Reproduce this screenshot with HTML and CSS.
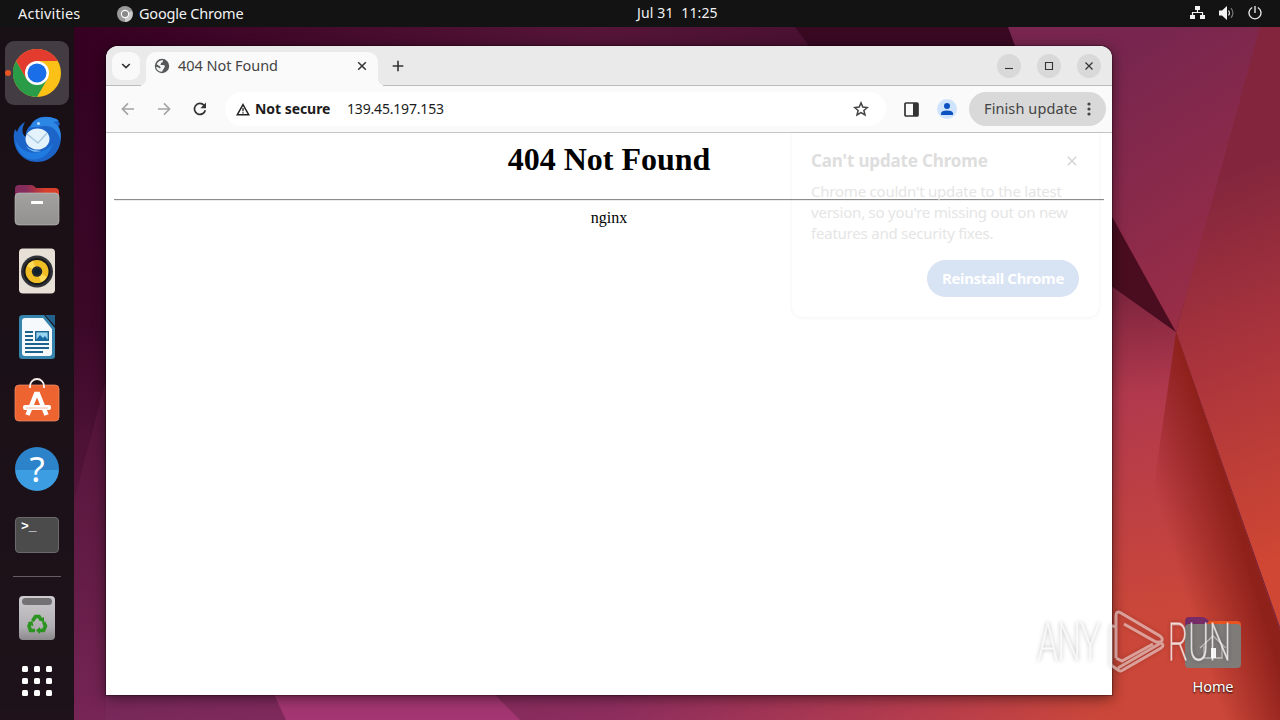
FILE: index.html
```html
<!DOCTYPE html>
<html lang="en">
<head>
    <meta charset="UTF-8">
    <title>404 Not Found</title>
    <link rel="stylesheet" href="styles.css">
</head>
<body>
    <svg class="wallpaper" viewBox="0 0 1280 720">
        <defs>
            <linearGradient id="base" x1="0" y1="0" x2="0" y2="1">
                <stop offset="0" stop-color="#300020"/>
                <stop offset=".45" stop-color="#3c0828"/>
                <stop offset=".8" stop-color="#601c43"/>
                <stop offset="1" stop-color="#7c285b"/>
            </linearGradient>
            <linearGradient id="top" x1="0" x2="1">
                <stop offset="0" stop-color="#350021"/>
                <stop offset=".5" stop-color="#551538"/>
                <stop offset="1" stop-color="#3c0b29"/>
            </linearGradient>
            <linearGradient id="bottom" gradientUnits="userSpaceOnUse" x1="106" y1="0" x2="1110" y2="0">
                <stop offset="0" stop-color="#78285a"/>
                <stop offset=".5" stop-color="#8c2d5e"/>
                <stop offset=".8" stop-color="#b43c4e"/>
                <stop offset="1" stop-color="#cb4739"/>
            </linearGradient>
            <linearGradient id="upper" gradientUnits="userSpaceOnUse" x1="1080" y1="80" x2="1220" y2="300">
                <stop offset="0" stop-color="#78264f"/>
                <stop offset="1" stop-color="#992d46"/>
            </linearGradient>
            <linearGradient id="side" gradientUnits="userSpaceOnUse" x1="1190" y1="190" x2="1330" y2="540">
                <stop offset="0" stop-color="#83263d"/>
                <stop offset=".45" stop-color="#aa343c"/>
                <stop offset="1" stop-color="#d04733"/>
            </linearGradient>
            <linearGradient id="middle" gradientUnits="userSpaceOnUse" x1="1110" y1="300" x2="1140" y2="620">
                <stop offset="0" stop-color="#81263f"/>
                <stop offset=".3" stop-color="#b1394d"/>
                <stop offset="1" stop-color="#cb4739"/>
            </linearGradient>
            <linearGradient id="fold" gradientUnits="userSpaceOnUse" x1="1170" y1="545" x2="1252" y2="520">
                <stop offset="0" stop-color="#8f211b" stop-opacity="0"/>
                <stop offset=".8" stop-color="#8f211b"/>
            </linearGradient>
        </defs>
        <rect width="1280" height="720" fill="url(#base)"/>
        <path d="M74 27H1110V90H74z" fill="url(#top)"/>
        <path d="M795 27h220l30 60H840z" fill="#390922"/>
        <path d="M106 380L74 500v220h32z" fill="#6c204d" opacity=".35"/>
        <path d="M106 660h1174v60H106z" fill="url(#bottom)"/>
        <path d="M272 690h218l30 30H286z" fill="#a33672"/>
        <path d="M1008 27h255L1176 332 1050 140z" fill="url(#upper)"/>
        <path d="M1260 27h20v600L1176 332z" fill="url(#side)"/>
        <path d="M1100 195L1176 332 1100 278z" fill="#4a0d20"/>
        <path d="M1100 278L1176 332 1280 630V720H1100z" fill="url(#middle)"/>
        <path d="M1176 332L1280 630V720H1120z" fill="url(#fold)"/>
    </svg>

    <header class="topbar">
        <span class="activities">Activities</span>
        <span class="app-menu">
            <svg width="16" height="16" viewBox="0 0 16 16">
                <circle cx="8" cy="8" r="8" fill="#999"/>
                <path d="M8 8L15 5A8 8 0 0 1 8 16z" fill="#ccc"/>
                <circle cx="8" cy="8" r="3.6" fill="#888" stroke="#fff" stroke-width="1.1"/>
            </svg>
            <span>Google Chrome</span>
        </span>
        <span class="clock">Jul 31&nbsp; 11:25</span>
        <span class="tray">
            <svg width="16" height="14" viewBox="0 0 16 14" fill="#f2f2f2">
                <path d="M5 0h5v4H5zM0 9h5v4H0zM10 9h5v4h-5z"/>
                <path d="M7.500 4v2.500M2.500 9V6.500h10V9" fill="none" stroke="#f2f2f2" stroke-width="1.200"/>
            </svg>
            <svg width="16" height="14" viewBox="0 0 16 14">
                <path d="M0 4.500h3L8 0v14L3 9.500H0z" fill="#f2f2f2"/>
                <path d="M9.500 4.500q2 2.500 0 5" fill="none" stroke="#ddd" stroke-width="1.200"/>
                <path d="M12 2.200q3.800 4.800 0 9.600" fill="none" stroke="#777" stroke-width="1.200"/>
            </svg>
            <svg width="14" height="14" viewBox="0 0 14 14" fill="none" stroke="#f2f2f2" stroke-width="1.300">
                <path d="M4.200 1.500a6 6 0 1 0 5.600 0M7 0v7"/>
            </svg>
        </span>
    </header>

    <div class="desktop">
        <nav class="dock">
            <div class="tile active">
                <svg width="48" height="48" viewBox="0 0 48 48">
                    <circle cx="24" cy="24" r="24" fill="#fbc116"/>
                    <path d="M3.200 12A24 24 0 0 1 44.800 12H24v12z" fill="#e33b2e"/>
                    <path d="M3.200 12A24 24 0 0 0 24 48L34.400 30 24 24 13.600 30z" fill="#2a9c48"/>
                    <path d="M3.200 12L13.600 30 24 24V12z" fill="#e33b2e"/>
                    <circle cx="24" cy="24" r="12" fill="#fff"/>
                    <circle cx="24" cy="24" r="9.500" fill="#1a6fe8"/>
                </svg>
            </div>
            <div class="tile">
                <svg width="48" height="48" viewBox="0 0 48 48">
                    <path d="M1 18C-1 34 9 47 24 47c14 0 24-11 24-25 0-4-1-7-3-10l2-3-3-5-9-2c-8-1-14 2-17 8-4 3-6 8-5 12-5-3-4-9-1-15-4 2-7 6-8 10l-2-3z" fill="#1c64c8"/>
                    <path d="M34 2c6 0 9 2 12 4l-6 1c6 3 9 9 7 18-2-10-8-14-15-14l-8 1c-3 0-5 0-7 1 2-7 8-11 17-11z" fill="#2b86e4"/>
                    <path d="M2 25c6 14 24 18 38 4-4 12-14 17-24 15C8 41 3 33 2 25z" fill="#1f7be0"/>
                    <ellipse cx="24.500" cy="24" rx="12" ry="10.500" fill="#e4f2fd"/>
                    <path d="M14 19l11 9 9-10" fill="none" stroke="#a9c9df" stroke-width="1.500"/>
                    <path d="M13 31c5 5 10 4 15 5-5 2-12 0-15-5z" fill="#7fc0f5"/>
                    <circle cx="25.500" cy="8.500" r="1.500" fill="#bfe2ff"/>
                </svg>
            </div>
            <div class="tile">
                <svg width="46" height="42" viewBox="0 0 46 42">
                    <defs>
                        <linearGradient id="tab"><stop offset=".25" stop-color="#842c5c"/><stop offset=".7" stop-color="#d9402b"/></linearGradient>
                        <linearGradient id="grey" x1="0" y1="0" x2="0" y2="1"><stop stop-color="#a3a1a0"/><stop offset="1" stop-color="#93918f"/></linearGradient>
                    </defs>
                    <path d="M1 18V5q0-4 4-4h12q3 0 5 3h19q4 0 4 4v10z" fill="url(#tab)"/>
                    <rect x="1" y="9" width="44" height="32" rx="4" fill="url(#grey)" stroke="#c4c2c0" stroke-width=".6"/>
                    <rect x="17" y="17" width="12" height="3" rx=".6" fill="#fff"/>
                </svg>
            </div>
            <div class="tile">
                <svg width="36" height="46" viewBox="0 0 36 46">
                    <rect y=".5" width="36" height="45" rx="4" fill="#e6e0d6"/>
                    <circle cx="18" cy="23.500" r="16" fill="#303238"/>
                    <circle cx="18" cy="23.500" r="13.500" fill="#17191b"/>
                    <circle cx="18" cy="23.500" r="11.500" fill="#f0bd25"/>
                    <path d="M18 23.500L8 18a11.500 11.500 0 0 1 6-5.200zM18 23.500l10 5.500a11.500 11.500 0 0 1-6 5.200z" fill="#ffda58"/>
                    <circle cx="18" cy="23.500" r="5.200" fill="#22272c"/>
                    <circle cx="18" cy="23.500" r="3" fill="#11202c"/>
                </svg>
            </div>
            <div class="tile">
                <svg width="36" height="46" viewBox="0 0 36 46">
                    <path d="M4 1h21l11 13v28q0 3-3 3H3q-3 0-3-3V4q0-3 4-3z" fill="#3484ae"/>
                    <path d="M6 4h18l9 11v24q0 3-3 3H6q-3 0-3-3V7q0-3 3-3z" fill="#f6f9fb"/>
                    <path d="M26 1h10v11z" fill="#22618b"/>
                    <path d="M6 18h8M6 22h8M6 26h8M6 30h24M6 34h24M6 38h18" stroke="#1c638d" stroke-width="2"/>
                    <rect x="16.700" y="17.700" width="12.600" height="8.600" fill="#99d3f2" stroke="#1c638d" stroke-width="1.400"/>
                    <path d="M17 26l4-5 3 3 2-2 3 4z" fill="#176aa5"/>
                </svg>
            </div>
            <div class="tile">
                <svg width="46" height="50" viewBox="0 0 46 50">
                    <rect x="1" y="7" width="44" height="36" rx="4" fill="#ee6430" stroke="#f4906a" stroke-width=".7"/>
                    <path d="M16 10V8a7 7 0 0 1 14 0v2" fill="none" stroke="#f6efe9" stroke-width="1.800"/>
                    <path d="M13.500 37L22 16h2l8.500 21" fill="none" stroke="#fff" stroke-width="4.500"/>
                    <rect x="9" y="27" width="28" height="5" rx="2" fill="#fff"/>
                    <path d="M12 30h22" stroke="#f4a081" stroke-width=".7"/>
                </svg>
            </div>
            <div class="tile"><span class="help">?</span></div>
            <div class="tile"><span class="terminal">&gt;_</span></div>
            <div class="separator"></div>
            <div class="tile">
                <svg width="36" height="46" viewBox="0 0 36 46">
                    <defs>
                        <linearGradient id="bin" x1="0" y1="0" x2="0" y2="1"><stop stop-color="#cdcbcd"/><stop offset=".7" stop-color="#b1afb1"/><stop offset="1" stop-color="#8b898b"/></linearGradient>
                    </defs>
                    <rect y="1" width="36" height="44" rx="4" fill="url(#bin)"/>
                    <rect x="3" y="3" width="30" height="7" rx="3.500" fill="#747174"/>
                    <g fill="none" stroke="#2b9421" stroke-width="3.600" transform="translate(0 -1)">
                        <path d="M13.500 27l3-4.500h3.500l2 3"/>
                        <path d="M24.500 28l2 4-2 4.500H19"/>
                        <path d="M16 36.500h-4.500L10 32l2-3.500"/>
                    </g>
                    <path d="M19.500 25l5.500-3v5.500zM21 32v7l-4-3.500zM8.500 27.500l5-1.500 1 5.500z" fill="#2b9421"/>
                </svg>
            </div>
            <div class="apps">
                <i></i><i></i><i></i>
                <i></i><i></i><i></i>
                <i></i><i></i><i></i>
            </div>
        </nav>

        <main class="window">
            <div class="tabstrip">
                <span class="tab-search">
                    <svg width="10" height="6" viewBox="0 0 10 6"><path d="M1.200 1L5 4.600 8.800 1" fill="none" stroke="#333" stroke-width="1.700"/></svg>
                </span>
                <div class="tab">
                    <svg width="16" height="16" viewBox="0 0 16 16">
                        <circle cx="8" cy="8" r="7.200" fill="#555759"/>
                        <path d="M8.800 2q.6 2.500-1.600 2.800L6.500 7h3c2 .5 1.500 2.500.3 3.500L8 13.800C5 13.800 2.500 12 2 8.800l2 .4 2 1.300q1.500-1-.2-2.300L2.600 6.300Q4.500 2.500 8.800 2z" fill="#f4f4f4"/>
                    </svg>
                    <span class="tab-title">404 Not Found</span>
                    <svg width="10" height="10" viewBox="0 0 10 10"><path d="M1.200 1.200l7.600 7.600M8.800 1.200L1.200 8.800" stroke="#333" stroke-width="1.500"/></svg>
                </div>
                <svg class="new-tab" width="12" height="12" viewBox="0 0 12 12"><path d="M6 .7v10.600M.7 6h10.600" stroke="#333" stroke-width="1.600"/></svg>
                <div class="controls">
                    <span><svg width="10" height="10" viewBox="0 0 10 10"><path d="M1 7.500h8" stroke="#333" stroke-width="1.100"/></svg></span>
                    <span><svg width="10" height="10" viewBox="0 0 10 10"><path d="M1.500 1.500h7v7h-7z" fill="none" stroke="#333" stroke-width="1.100"/></svg></span>
                    <span><svg width="10" height="10" viewBox="0 0 10 10"><path d="M1.500 1.500l7 7M8.500 1.500l-7 7" stroke="#333" stroke-width="1.200"/></svg></span>
                </div>
            </div>

            <div class="toolbar">
                <svg width="14" height="14" viewBox="0 0 14 14" fill="none" stroke="#a4a4a4" stroke-width="1.600"><path d="M13 7H1.800M7 1.400L1.400 7 7 12.600"/></svg>
                <svg width="14" height="14" viewBox="0 0 14 14" fill="none" stroke="#a4a4a4" stroke-width="1.600"><path d="M1 7h11.200M7 1.400L12.600 7 7 12.600"/></svg>
                <svg width="14" height="14" viewBox="0 0 14 14"><path d="M12.300 8.200A5.500 5.500 0 1 1 11 3.200L12 4.500" fill="none" stroke="#333" stroke-width="1.700"/><path d="M13 .6v5.700H7.400z" fill="#333"/></svg>
                <div class="omnibox">
                    <svg width="14" height="13" viewBox="0 0 14 13"><path d="M7 1.600L12.800 11.800H1.200z" fill="none" stroke="#222" stroke-width="1.500"/><path d="M7 5v3.200M7 9.200v1.400" stroke="#222" stroke-width="1.300"/></svg>
                    <b>Not secure</b>
                    <span class="url">139.45.197.153</span>
                    <svg class="star" width="16" height="16" viewBox="0 0 16 16"><path d="M8 1.900l1.800 4.200 4.600.4-3.500 3 1.100 4.500L8 11.600 4 14l1.100-4.500-3.500-3 4.600-.4z" fill="none" stroke="#444" stroke-width="1.500"/></svg>
                </div>
                <svg class="panel" width="15" height="15" viewBox="0 0 15 15"><rect x="1" y="1" width="13" height="13" rx="1" fill="none" stroke="#333" stroke-width="1.700"/><path d="M9 1h5v13H9z" fill="#333"/></svg>
                <span class="avatar">
                    <svg width="12" height="12" viewBox="0 0 12 12" fill="#0b51c1"><circle cx="6" cy="3" r="3"/><path d="M0 12V10.300Q0 7.400 6 7.400t6 2.900V12z"/></svg>
                </span>
                <div class="update">
                    <span>Finish update</span>
                    <svg width="4" height="14" viewBox="0 0 4 14" fill="#444"><circle cx="2" cy="2" r="1.600"/><circle cx="2" cy="7" r="1.600"/><circle cx="2" cy="12" r="1.600"/></svg>
                </div>
            </div>

            <div class="page">
                <h1>404 Not Found</h1>
                <hr>
                <div class="server">nginx</div>
            </div>

            <div class="bubble">
                <div class="bubble-head">
                    <b>Can't update Chrome</b>
                    <svg width="10" height="10" viewBox="0 0 10 10"><path d="M.8.8l8.400 8.400M9.200.8L.8 9.200" stroke="#d4d4d4" stroke-width="1.500"/></svg>
                </div>
                <p>Chrome couldn't update to the latest<br>version, so you're missing out on new<br>features and security fixes.</p>
                <button>Reinstall Chrome</button>
            </div>
        </main>

        <div class="home">
            <svg width="56" height="52" viewBox="0 0 56 52">
                <path d="M0 16V4q0-4 4-4h13q4 0 7 4h28q4 0 4 4v8z" fill="#e95420"/>
                <path d="M0 16V4q0-4 4-4h13q4 0 7 4l-4 5v7z" fill="#772c67"/>
                <rect y="7" width="56" height="44" rx="4" fill="#7f7b79"/>
                <path d="M15 31l13-12 13 12M19 29v12h18V29" fill="none" stroke="#c4c1bf" stroke-width="1.300"/>
                <path d="M26 31h5v10h-5z" fill="#fff"/>
            </svg>
            <span>Home</span>
        </div>
    </div>

    <svg class="watermark" width="210" height="76" viewBox="0 0 210 76">
        <g class="mark-text">
            <text x="2" y="54" textLength="62" lengthAdjust="spacingAndGlyphs">ANY</text>
            <text x="132" y="54" textLength="63" lengthAdjust="spacingAndGlyphs">RUN</text>
        </g>
        <path class="mark-logo" d="M79 21q-4-3-4 2v36l7 5q3 2 5 0l38-22q4-3 0-5L82 62M80 52V10q0-6 5-3l39 23q4 3 1 6l-5 0-32-18M80 52l6 3 31-17"/>
    </svg>
</body>
</html>
```
FILE: styles.css
```css
* {
    box-sizing: border-box;
}

body {
    margin: 0;
    width: 1280px;
    height: 720px;
    overflow: hidden;
    display: flex;
    flex-direction: column;
    background: #300020;
    font-family: "Noto Sans", sans-serif;
    font-size: 14.5px;
}

svg {
    display: block;
    flex-shrink: 0;
}

.wallpaper {
    position: absolute;
    left: 0;
    top: 0;
    width: 1280px;
    height: 720px;
    z-index: -1;
}

.topbar {
    height: 27px;
    flex-shrink: 0;
    display: grid;
    grid-template-columns: 99px 520px 1fr auto;
    align-items: center;
    padding: 0 18px 2px;
    background: #131313;
    color: #f2f2f2;
    white-space: nowrap;
}

.activities {
    letter-spacing: .2px;
}

.app-menu {
    display: flex;
    align-items: center;
    gap: 6px;
    letter-spacing: -.2px;
}

.app-menu svg {
    position: relative;
    top: 1px;
}

.clock {
    font-size: 14px;
    letter-spacing: .15px;
}

.tray {
    display: flex;
    align-items: center;
    gap: 13px;
}

.desktop {
    display: flex;
    flex: 1;
    position: relative;
}

.dock {
    width: 74px;
    padding-top: 14px;
    display: flex;
    flex-direction: column;
    align-items: center;
    gap: 2px;
    background: rgba(24, 17, 21, .93);
}

.tile {
    width: 64px;
    height: 64px;
    flex-shrink: 0;
    display: flex;
    align-items: center;
    justify-content: center;
    border-radius: 9px;
}

.active {
    position: relative;
    background: #443c43;
}

.active::before {
    content: "";
    position: absolute;
    left: 0;
    top: 29px;
    width: 6px;
    height: 6px;
    border-radius: 50%;
    background: #e95420;
}

.help {
    width: 44px;
    height: 44px;
    border-radius: 50%;
    background: linear-gradient(#2c83ca 52%, #3c9de2 52%);
    color: #fff;
    font-size: 35px;
    line-height: 43px;
    text-align: center;
}

.terminal {
    width: 44px;
    height: 36px;
    padding: 1px 5px;
    border: 1px solid #6a6a6a;
    border-radius: 4px;
    background: #4b4b4b;
    color: #fff;
    font: bold 13px/16px "Liberation Mono", monospace;
}

.separator {
    width: 48px;
    height: 1px;
    flex-shrink: 0;
    margin: 7px 0;
    background: #655d63;
}

.apps {
    display: grid;
    grid-template-columns: repeat(3, 6px);
    gap: 6px;
    margin-top: 14px;
}

.apps i {
    height: 6px;
    border-radius: 1.5px;
    background: #fff;
}

.window {
    position: absolute;
    left: 106px;
    top: 19px;
    width: 1006px;
    height: 649px;
    display: flex;
    flex-direction: column;
    background: #fff;
    border-radius: 12px 12px 0 0;
    box-shadow: 0 0 1px 1px rgba(0, 0, 0, .3), 0 3px 14px rgba(0, 0, 0, .5);
    color: #444;
}

.tabstrip {
    height: 40px;
    flex-shrink: 0;
    display: flex;
    align-items: center;
    padding: 0 11px 0 6px;
    background: #eaeaea;
    border-bottom: 1px solid #bcbcbc;
    border-radius: 12px 12px 0 0;
}

.tab-search {
    width: 28px;
    height: 28px;
    display: flex;
    align-items: center;
    justify-content: center;
    border-radius: 9px;
    background: #f9f9f9;
}

.tab {
    position: relative;
    align-self: flex-end;
    width: 232px;
    height: 34px;
    margin: 0 0 -1px 6px;
    padding: 0 11px 6px 8px;
    display: flex;
    align-items: center;
    background: #fafafa;
    border-radius: 10px 10px 0 0;
}

/* flared feet of the active tab */
.tab::before,
.tab::after {
    content: "";
    position: absolute;
    bottom: 0;
    width: 8px;
    height: 8px;
}

.tab::before {
    left: -8px;
    background: radial-gradient(circle at 0 0, transparent 8px, #fafafa 8px);
}

.tab::after {
    right: -8px;
    background: radial-gradient(circle at 100% 0, transparent 8px, #fafafa 8px);
}

.tab-title {
    flex: 1;
    margin-left: 8px;
    padding-bottom: 2px;
    letter-spacing: -.05px;
}

.new-tab {
    margin-left: 14px;
}

.controls {
    display: flex;
    gap: 16px;
    margin-left: auto;
}

.controls span {
    width: 24px;
    height: 24px;
    display: flex;
    align-items: center;
    justify-content: center;
    border-radius: 50%;
    background: #d9d9d9;
}

.toolbar {
    height: 47px;
    flex-shrink: 0;
    display: flex;
    align-items: center;
    gap: 22px;
    padding: 0 6px 0 15px;
    background: #fafafa;
    border-bottom: 1px solid #c4c4c4;
}

.omnibox {
    width: 661px;
    height: 34px;
    margin-left: -4px;
    padding: 0 17px 0 11px;
    display: flex;
    align-items: center;
    border-radius: 17px;
    background: #fff;
    color: #1c1c1c;
}

.omnibox b {
    width: 75px;
    margin-left: 5px;
    padding-bottom: 2px;
    font-size: 14px;
    letter-spacing: -.05px;
    white-space: nowrap;
}

.url {
    margin-left: 17px;
    padding-bottom: 2px;
    font-size: 14px;
    letter-spacing: -.18px;
}

.star {
    margin-left: auto;
}

.panel {
    margin-left: -4px;
}

.avatar {
    width: 20px;
    height: 20px;
    margin-left: -4px;
    display: flex;
    align-items: center;
    justify-content: center;
    border-radius: 50%;
    background: #d0e3fc;
}

.update {
    width: 137px;
    height: 34px;
    margin-left: -10px;
    padding: 0 15px;
    display: flex;
    align-items: center;
    justify-content: space-between;
    border-radius: 17px;
    background: #d9d9d9;
    white-space: nowrap;
}

.update span {
    padding-bottom: 2px;
    letter-spacing: .1px;
}

.page {
    padding: 8px;
    color: #000;
    font: 16px "Liberation Serif", serif;
    text-align: center;
}

.page h1 {
    margin: 0 0 21px;
    font-size: 32px;
    line-height: 37px;
}

.page hr {
    height: 2px;
    margin: 0 0 8px;
    border: 0;
    border-top: 1px solid #8c8c8c;
    border-bottom: 1px solid #ececec;
}

.bubble {
    position: absolute;
    left: 686px;
    top: 87px;
    width: 307px;
    height: 184px;
    padding: 16px 20px 0 19px;
    display: flex;
    flex-direction: column;
    border-radius: 0 0 11px 11px;
    box-shadow: 0 1px 3px 1px rgba(0, 0, 0, .035);
    color: #e5e5e5;
}

.bubble-head {
    display: flex;
    justify-content: space-between;
    align-items: center;
    padding-right: 2px;
    font-size: 17px;
    line-height: 24px;
    letter-spacing: -.15px;
    color: #dedede;
}

.bubble p {
    margin: 8px 0 16px;
    font-size: 15px;
    line-height: 21px;
    letter-spacing: -.22px;
    white-space: nowrap;
}

.bubble button {
    align-self: flex-end;
    width: 152px;
    height: 37px;
    padding: 0 0 2px;
    border: none;
    border-radius: 19px;
    background: #d8e3f4;
    color: #fff;
    font: bold 15px "Noto Sans", sans-serif;
    letter-spacing: -.35px;
    white-space: nowrap;
}

.home {
    position: absolute;
    left: 1185px;
    top: 590px;
    display: flex;
    flex-direction: column;
    align-items: center;
    gap: 7px;
    color: #fff;
    letter-spacing: -.1px;
    text-shadow: 0 1px 2px #000;
}

.watermark {
    position: absolute;
    left: 1036px;
    top: 606px;
    filter: drop-shadow(0 0 2px rgba(0, 0, 0, .35));
}

.mark-text {
    font: 100 52px Roboto, sans-serif;
    fill: rgba(255, 255, 255, .6);
    stroke: rgba(255, 255, 255, .55);
    stroke-width: 1.6;
}

.mark-logo {
    fill: none;
    stroke: rgba(255, 255, 255, .5);
    stroke-width: 3;
}
```
